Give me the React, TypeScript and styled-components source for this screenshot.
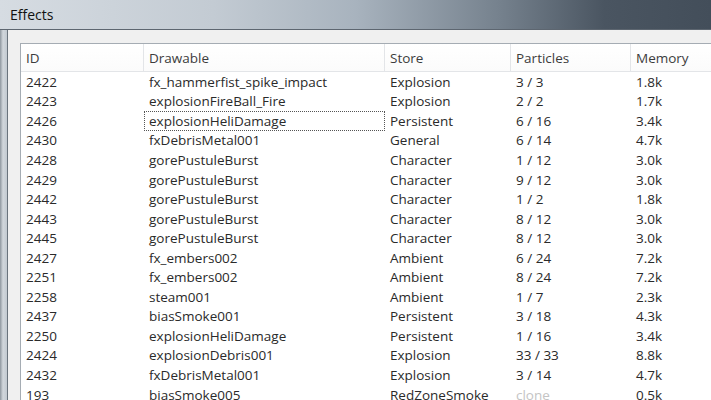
import React from 'react';
import styled, {createGlobalStyle} from "styled-components";

const GlobalStyle = createGlobalStyle`
  html, body {
    margin: 0;
    padding: 0;
    overflow: hidden;
    background: #ffffff;
  }
`

interface Effect {
    id: string
    drawable: string
    store: string
    particles: string
    memory: string
    dim?: boolean
}

const effects: Effect[] = [
    {id: '2422', drawable: 'fx_hammerfist_spike_impact', store: 'Explosion', particles: '3 / 3', memory: '1.8k'},
    {id: '2423', drawable: 'explosionFireBall_Fire', store: 'Explosion', particles: '2 / 2', memory: '1.7k'},
    {id: '2426', drawable: 'explosionHeliDamage', store: 'Persistent', particles: '6 / 16', memory: '3.4k'},
    {id: '2430', drawable: 'fxDebrisMetal001', store: 'General', particles: '6 / 14', memory: '4.7k'},
    {id: '2428', drawable: 'gorePustuleBurst', store: 'Character', particles: '1 / 12', memory: '3.0k'},
    {id: '2429', drawable: 'gorePustuleBurst', store: 'Character', particles: '9 / 12', memory: '3.0k'},
    {id: '2442', drawable: 'gorePustuleBurst', store: 'Character', particles: '1 / 2', memory: '1.8k'},
    {id: '2443', drawable: 'gorePustuleBurst', store: 'Character', particles: '8 / 12', memory: '3.0k'},
    {id: '2445', drawable: 'gorePustuleBurst', store: 'Character', particles: '8 / 12', memory: '3.0k'},
    {id: '2427', drawable: 'fx_embers002', store: 'Ambient', particles: '6 / 24', memory: '7.2k'},
    {id: '2251', drawable: 'fx_embers002', store: 'Ambient', particles: '8 / 24', memory: '7.2k'},
    {id: '2258', drawable: 'steam001', store: 'Ambient', particles: '1 / 7', memory: '2.3k'},
    {id: '2437', drawable: 'biasSmoke001', store: 'Persistent', particles: '3 / 18', memory: '4.3k'},
    {id: '2250', drawable: 'explosionHeliDamage', store: 'Persistent', particles: '1 / 16', memory: '3.4k'},
    {id: '2424', drawable: 'explosionDebris001', store: 'Explosion', particles: '33 / 33', memory: '8.8k'},
    {id: '2432', drawable: 'fxDebrisMetal001', store: 'Explosion', particles: '3 / 14', memory: '4.7k'},
    {id: '193', drawable: 'biasSmoke005', store: 'RedZoneSmoke', particles: 'clone', memory: '0.5k', dim: true},
]

const FOCUSED = 2

const App: React.FC = () => {
    return (
        <>
            <GlobalStyle/>
            <Window>
                <TitleBar>Effects</TitleBar>
                <Frame>
                    <Client>
                        <ListView>
                            <HeaderRow>
                                <HeaderCell>ID</HeaderCell>
                                <HeaderCell>Drawable</HeaderCell>
                                <HeaderCell>Store</HeaderCell>
                                <HeaderCell>Particles</HeaderCell>
                                <HeaderCell>Memory</HeaderCell>
                            </HeaderRow>
                            {effects.map((e, i) => (
                                <Row key={e.id + i}>
                                    <Cell>{e.id}</Cell>
                                    <Cell $focused={i === FOCUSED}>{e.drawable}</Cell>
                                    <Cell>{e.store}</Cell>
                                    <Cell $dim={e.dim}>{e.particles}</Cell>
                                    <Cell>{e.memory}</Cell>
                                </Row>
                            ))}
                        </ListView>
                    </Client>
                </Frame>
            </Window>
        </>
    );
};

const columns = '123px 241px 126px 120px 140px'

const Window = styled.div`
  width: 711px;
  height: 400px;
  display: flex;
  flex-direction: column;
  overflow: hidden;
  font-family: "Open Sans", "Noto Sans", sans-serif;
`

const TitleBar = styled.div`
  height: 29px;
  flex: none;
  display: flex;
  align-items: center;
  padding-left: 10px;
  font-size: 14px;
  color: #111;
  background: linear-gradient(90deg, #d6dce2 0%, #c3cbd3 30%, #a8b3be 50%, #76828e 70%, #4a5561 85%, #434e5a 100%);
  border-bottom: 1px solid #5d6670;
`

const Frame = styled.div`
  flex: 1;
  display: flex;
  padding-left: 7px;
  background: linear-gradient(90deg, #8e969e 0px, #d2d7dc 3px, #c2c9d0 7px);
`

const Client = styled.div`
  flex: 1;
  display: flex;
  background: #f0f0f0;
  border-left: 1px solid #6a737c;
  padding: 13px 0 0 12px;
`

const ListView = styled.div`
  flex: 1;
  background: #ffffff;
  border-top: 1px solid #a5acb3;
  border-left: 1px solid #a5acb3;
  color: #2a2a2a;
  font-size: 13.5px;
`

const HeaderRow = styled.div`
  display: grid;
  grid-template-columns: ${columns};
  height: 27px;
  border-bottom: 1px solid #e3e5e8;
  background: linear-gradient(#ffffff, #fbfbfb);
`

const HeaderCell = styled.div`
  display: flex;
  align-items: center;
  padding-left: 5px;
  color: #3c3c3c;
  border-right: 1px solid #e3e5e8;
`

const Row = styled.div`
  display: grid;
  grid-template-columns: ${columns};
  height: 19.55px;
`

const Cell = styled.div<{ $focused?: boolean, $dim?: boolean }>`
  display: flex;
  align-items: center;
  padding-left: 4px;
  white-space: nowrap;
  overflow: hidden;
  border: 1px dotted ${p => p.$focused ? '#555' : 'transparent'};
  color: ${p => p.$dim ? '#c4c4c4' : 'inherit'};
`

export default App;
